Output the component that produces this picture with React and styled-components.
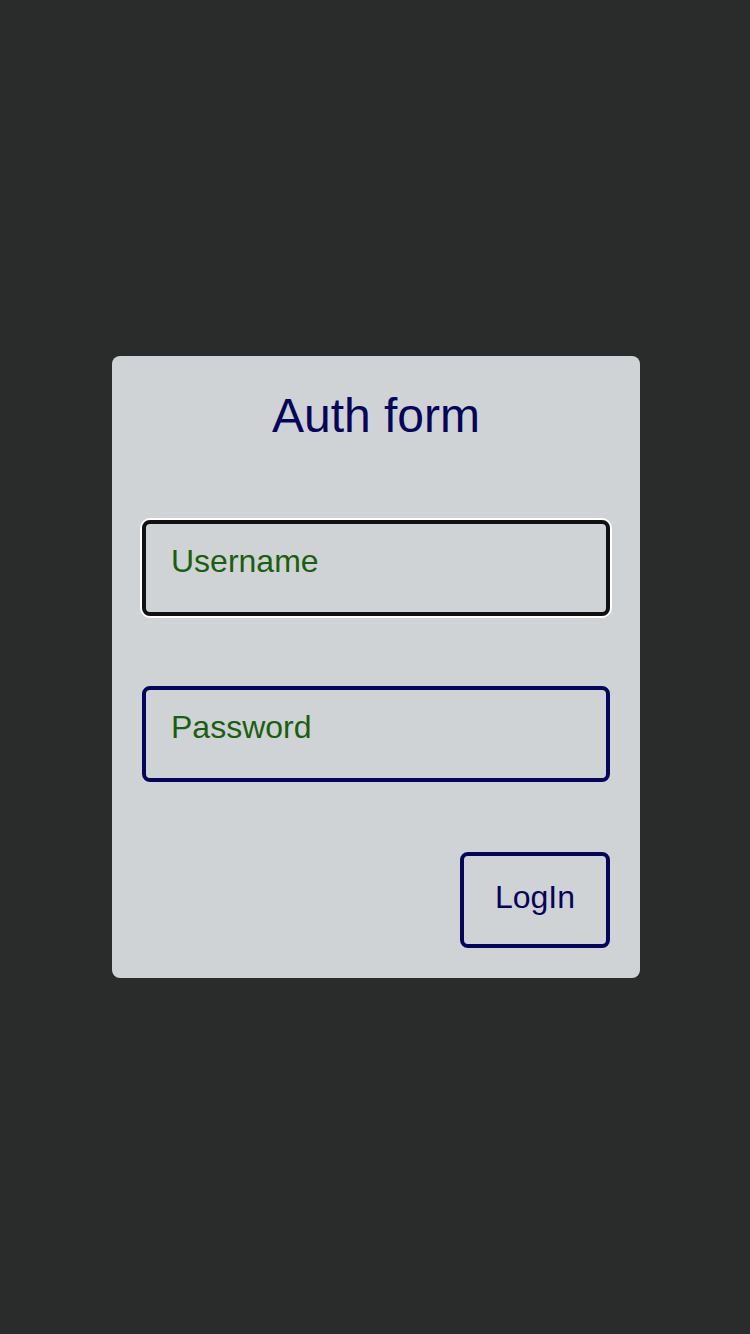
import React from "react";
import styled, { createGlobalStyle } from "styled-components";

const GlobalStyle = createGlobalStyle`
  html, body {
    margin: 0;
    padding: 0;
    background: #2a2b2b;
    font-family: "Liberation Sans", Arial, sans-serif;
  }
`;

const Page = styled.div`
  min-height: 100vh;
  padding-left: 2px;
  box-sizing: border-box;
  display: flex;
  align-items: center;
  justify-content: center;
`;

const Card = styled.form`
  width: 528px;
  box-sizing: border-box;
  padding: 32px 30px 30px;
  background: #d0d3d6;
  border-radius: 8px;
  display: flex;
  flex-direction: column;
`;

const Title = styled.h1`
  margin: 0 0 77px;
  font-size: 48px;
  font-weight: 400;
  line-height: 55px;
  text-align: center;
  color: #05055a;
`;

const Field = styled.input`
  box-sizing: border-box;
  width: 100%;
  height: 96px;
  margin-bottom: 70px;
  padding: 0 25px 14px;
  border: 4px solid ${(p) => (p.$focused ? "#111111" : "#05055a")};
  border-radius: 8px;
  box-shadow: ${(p) => (p.$focused ? "0 0 0 2px #ffffff" : "none")};
  background: transparent;
  font-family: "Liberation Sans", Arial, sans-serif;
  font-size: 32px;
  color: #1b5e10;
  outline: none;
  &::placeholder {
    color: #1b5e10;
    opacity: 1;
  }
`;

const Actions = styled.div`
  display: flex;
  justify-content: flex-end;
`;

const Button = styled.button`
  width: 150px;
  height: 96px;
  padding: 0 0 5px;
  border: 4px solid #05055a;
  border-radius: 8px;
  background: transparent;
  font-family: "Liberation Sans", Arial, sans-serif;
  font-size: 32px;
  color: #05055a;
  cursor: pointer;
`;

export default function App() {
  return (
    <>
      <GlobalStyle />
      <Page>
        <Card onSubmit={(e) => e.preventDefault()}>
          <Title>Auth form</Title>
          <Field $focused placeholder="Username" />
          <Field type="password" placeholder="Password" />
          <Actions>
            <Button type="submit">LogIn</Button>
          </Actions>
        </Card>
      </Page>
    </>
  );
}
